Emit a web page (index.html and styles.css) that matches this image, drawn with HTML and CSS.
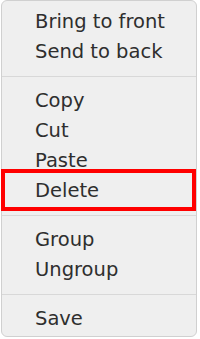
FILE: index.html
```html
<!DOCTYPE html>
<html lang="en">
<head>
  <meta charset="UTF-8" />
  <meta name="viewport" content="width=device-width, initial-scale=1.0" />
  <title>Context menu</title>
  <link rel="stylesheet" href="styles.css">
</head>
<body>

  <div class="menu">
    <div class="item">Bring to front</div>
    <div class="item">Send to back</div>
    <div class="sep"></div>
    <div class="item">Copy</div>
    <div class="item">Cut</div>
    <div class="item">Paste</div>
    <div class="item marked">Delete</div>
    <div class="sep"></div>
    <div class="item">Group</div>
    <div class="item">Ungroup</div>
    <div class="sep"></div>
    <div class="item">Save</div>
  </div>

</body>
</html>
```

FILE: styles.css
```css
body {
  margin: 0;
  background: #fff;
  font-family: "DejaVu Sans", sans-serif;
}
.menu {
  box-sizing: border-box;
  width: 196px;
  height: 337px;
  margin-left: 1px;
  padding-top: 5.5px;
  background: #efefef;
  border: 1px solid #d0d0d0;
  border-radius: 6px;
}
.item {
  position: relative;
  height: 30px;
  line-height: 30px;
  padding-left: 33px;
  font-size: 19.5px;
  color: #2e2e2e;
}
.sep {
  height: 1px;
  margin: 9px 0;
  background: #d8d8d8;
}
.item.marked::after {
  content: "";
  position: absolute;
  top: -7px;
  bottom: -5px;
  left: -1px;
  right: 0;
  border: 4px solid #ff0000;
}
```
